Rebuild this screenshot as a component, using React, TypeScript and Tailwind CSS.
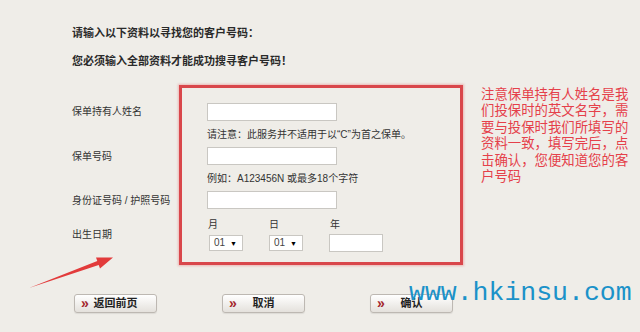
import React from "react";

const cjk = "font-['Liberation_Sans','Noto_Sans_CJK_SC',sans-serif]";

// Text field with a light grey frame
const Field: React.FC<{ width: string; height?: string }> = ({ width, height = "h-[18px]" }) => (
  <input
    type="text"
    className={`${width} ${height} block border border-[#c9c7c2] bg-white outline-none`}
  />
);

// Fake drop-down showing "01"
const DropBox: React.FC = () => (
  <div className="flex h-[16px] w-[34px] items-center justify-between border border-[#c9c7c2] bg-white pl-[4px] pr-[5px] text-[10px] leading-none text-[#444]">
    <span>01</span>
    <span className="text-[7px] text-black">▼</span>
  </div>
);

const NavButton: React.FC<{ label: string }> = ({ label }) => (
  <button className="grid h-[19px] w-[83px] grid-cols-[16px_1fr_16px] items-center rounded-[3px] border border-[#bdb8b2] bg-gradient-to-b from-white to-[#e4e1dc] shadow-[0_1px_1px_rgba(0,0,0,0.08)]">
    <span className="pl-[6px] text-left text-[14px] font-bold leading-[14px] text-[#a3262c] -mt-[2px]">»</span>
    <span className="whitespace-nowrap text-center text-[11px] font-bold leading-none text-[#222]">
      {label}
    </span>
    <span />
  </button>
);

const App: React.FC = () => {
  return (
    <div className={`relative h-[332px] w-[640px] overflow-hidden bg-[#efede8] ${cjk}`}>
      {/* Heading */}
      <div className="pl-[72px] pt-[26px] text-[11px] font-bold leading-[14px] text-[#2a2a2a]">
        <p>请输入以下资料以寻找您的客户号码：</p>
        <p className="mt-[14px]">您必须输入全部资料才能成功搜寻客户号码！</p>
      </div>

      {/* Form row */}
      <div className="mt-[17px] flex items-start">
        <div className="w-[179px] pl-[72px] text-[10px] leading-[14px] text-[#333] whitespace-nowrap">
          <p className="mt-[20px]">保单持有人姓名</p>
          <p className="mt-[31px]">保单号码</p>
          <p className="mt-[30px]">身份证号码 / 护照号码</p>
          <p className="mt-[20px]">出生日期</p>
        </div>

        <div className="h-[180px] w-[284px] border-[3px] border-[#d9474b] pl-[25px] pt-[15px] shadow-[0_0_2px_1px_rgba(230,120,120,0.45)]">
          <Field width="w-[130px]" />
          <p className="mt-[7px] text-[10px] leading-[14px] text-[#333] whitespace-nowrap">
            请注意：此服务并不适用于以{"\u201cC\u201d"}为首之保单。
          </p>
          <div className="mt-[5px]">
            <Field width="w-[130px]" />
          </div>
          <p className="mt-[7px] text-[10px] leading-[14px] text-[#333] whitespace-nowrap">
            例如：A123456N 或最多18个字符
          </p>
          <div className="mt-[5px]">
            <Field width="w-[130px]" />
          </div>
          <div className="mt-[9px] flex text-[10px] leading-[14px] text-[#333]">
            <div className="w-[60px] pl-[1px]">
              <p>月</p>
              <div className="mt-[3px] pl-[1px]">
                <DropBox />
              </div>
            </div>
            <div className="w-[60px] pl-[2px]">
              <p>日</p>
              <div className="mt-[3px]">
                <DropBox />
              </div>
            </div>
            <div className="w-[60px] pl-[2px]">
              <p className="pl-[1px]">年</p>
              <div className="mt-[2px]">
                <Field width="w-[54px]" />
              </div>
            </div>
          </div>
        </div>

        <p className="ml-[18px] mt-[2px] text-[13.4px] leading-[16.4px] text-[#e5404a] whitespace-nowrap">
          注意保单持有人姓名是我
          <br />
          们投保时的英文名字，需
          <br />
          要与投保时我们所填写的
          <br />
          资料一致，填写完后，点
          <br />
          击确认，您便知道您的客
          <br />
          户号码
        </p>
      </div>

      {/* Buttons */}
      <div className="mt-[29px] flex gap-[65px] pl-[74px]">
        <NavButton label="返回前页" />
        <NavButton label="取消" />
        <NavButton label="确认" />
      </div>

      {/* Red pointer arrow drawn over the page */}
      <svg
        className="absolute left-[20px] top-[245px]"
        width="100"
        height="50"
        viewBox="20 245 100 50"
      >
        <polygon
          points="29,288 97.3,261.1 96,257.4 113,257.5 100,268.6 98.7,264.9"
          fill="#e23b3b"
        />
      </svg>

      {/* Watermark, stamped over the page */}
      <div className="pointer-events-none absolute left-[409px] top-[278px] font-['Liberation_Mono',monospace] text-[26.5px] leading-[30px] text-[#1b92c9]">
        www.hkinsu.com
      </div>
    </div>
  );
};

export default App;
